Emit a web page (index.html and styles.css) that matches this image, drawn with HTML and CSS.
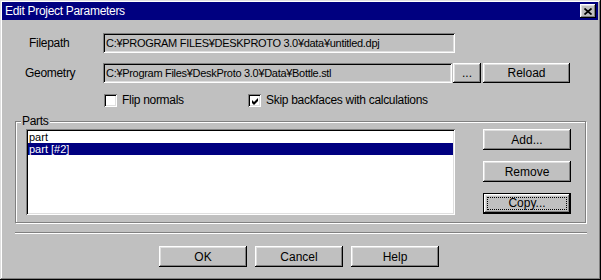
FILE: index.html
```html
<!DOCTYPE html>
<html lang="en">
<head>
	<meta charset="UTF-8">
	<title>Edit Project Parameters</title>
	<link rel="stylesheet" href="styles.css">
</head>
<body>
	<div class="window">
		<div class="titlebar">
			<span class="title">Edit Project Parameters</span>
			<span class="close">
				<svg width="8" height="7" viewBox="0 0 8 7"><path d="M0.5 0.5 L7.5 6.5 M7.5 0.5 L0.5 6.5" stroke="#000" stroke-width="1.7" fill="none"/></svg>
			</span>
		</div>

		<div class="content">
			<div class="row">
				<span class="lbl lbl-file">Filepath</span>
				<div class="field field-file">C:¥PROGRAM FILES¥DESKPROTO 3.0¥data¥untitled.dpj</div>
			</div>

			<div class="row row-geo">
				<span class="lbl lbl-geo">Geometry</span>
				<div class="field field-geo">C:¥Program Files¥DeskProto 3.0¥Data¥Bottle.stl</div>
				<button class="btn btn-dots">...</button>
				<button class="btn btn-row">Reload</button>
			</div>

			<div class="checks">
				<label class="check check-flip"><span class="box"></span>Flip normals</label>
				<label class="check"><span class="box">
					<svg width="7" height="7" viewBox="0 0 7 7"><polygon points="0,2 2,4 6,0 6,3 2,7 0,5" fill="#000"/></svg>
				</span>Skip backfaces with calculations</label>
			</div>

			<div class="group">
				<span class="legend">Parts</span>
				<div class="group-body">
					<div class="list">
						<div class="item">part</div>
						<div class="item selected">part [#2]</div>
					</div>
					<div class="side">
						<button class="btn">Add...</button>
						<button class="btn">Remove</button>
						<button class="btn default"><span class="focus">Copy...</span></button>
					</div>
				</div>
			</div>

			<div class="sep"></div>

			<div class="footer">
				<button class="btn">OK</button>
				<button class="btn">Cancel</button>
				<button class="btn">Help</button>
			</div>
		</div>
	</div>
</body>
</html>
```
FILE: styles.css
```css
*{
	margin:0;
	padding:0;
	box-sizing:border-box;
}
body{
	background:#c0c0c0;
	font-family:"Liberation Sans", Arial, sans-serif;
	font-size:11px;
	letter-spacing:-0.3px;
	color:#000;
}
.window{
	width:601px;
	height:280px;
	padding:2px 3px 3px 2px;
	background:#c0c0c0;
	box-shadow:inset -1px -1px #000, inset 1px 1px #dfdfdf, inset -2px -2px #808080, inset 2px 2px #fff;
}
.titlebar{
	height:18px;
	background:#000080;
	color:#fff;
	font-size:12px;
	display:flex;
	align-items:center;
	justify-content:space-between;
	padding-left:3px;
	padding-right:2px;
	line-height:18px;
}
.close{
	width:16px;
	height:14px;
	background:#c0c0c0;
	box-shadow:inset -1px -1px #000, inset 1px 1px #fff, inset -2px -2px #808080, inset 2px 2px #dfdfdf;
	display:flex;
	align-items:center;
	justify-content:center;
	padding-right:1px;
}
.close svg{
	display:block;
}

/* top rows */
.row{
	display:flex;
	align-items:center;
	height:20px;
	margin-top:13px;
}
.row-geo{
	margin-top:10px;
}
.lbl{
	width:101px;
	font-size:12px;
}
.lbl-file{
	padding-left:27px;
}
.lbl-geo{
	padding-left:23px;
}
.field{
	height:20px;
	line-height:16px;
	padding:2px 2px 2px 3px;
	white-space:nowrap;
	overflow:hidden;
	box-shadow:inset 1px 1px #808080, inset -1px -1px #fff, inset 2px 2px #000, inset -2px -2px #dfdfdf;
}
.field-file{
	width:352px;
}
.field-geo{
	width:349px;
}

/* buttons */
.btn{
	font:inherit;
	font-size:12px;
	color:#000;
	background:#c0c0c0;
	border:0;
	width:88px;
	height:21px;
	box-shadow:inset -1px -1px #000, inset 1px 1px #fff, inset -2px -2px #808080, inset 2px 2px #dfdfdf;
}
.btn-dots{
	width:28px;
	height:20px;
	margin-left:1px;
	margin-right:2px;
}
.btn-row{
	width:87px;
	height:20px;
}
.default{
	display:flex;
	padding:4px;
	box-shadow:inset 0 0 0 1px #000, inset -2px -2px #000, inset 2px 2px #fff, inset -3px -3px #808080, inset 3px 3px #dfdfdf;
}
.focus{
	flex:1;
	border:1px dotted #000;
	line-height:11px;
}

/* checkboxes */
.checks{
	display:flex;
	margin-top:11px;
	padding-left:102px;
	height:13px;
	line-height:13px;
	font-size:12px;
}
.check{
	display:flex;
	align-items:center;
}
.check-flip{
	width:144px;
}
.box{
	width:13px;
	height:13px;
	margin-right:5px;
	background:#fff;
	display:flex;
	align-items:center;
	justify-content:center;
	box-shadow:inset 1px 1px #808080, inset -1px -1px #fff, inset 2px 2px #000, inset -2px -2px #dfdfdf;
}
.box svg{
	display:block;
	margin-left:1px;
	margin-top:1px;
}

/* group */
.group{
	margin-top:14px;
	margin-left:13px;
	width:571px;
	height:102px;
	border:1px solid #808080;
	box-shadow:inset 1px 1px #fff, 1px 1px #fff;
}
.legend{
	display:block;
	width:max-content;
	margin:-8px 0 0 5px;
	padding:0 1px;
	height:14px;
	line-height:14px;
	font-size:12px;
	background:#c0c0c0;
}
.group-body{
	display:flex;
	margin-top:1px;
	padding-left:10px;
}
.list{
	width:429px;
	height:86px;
	background:#fff;
	padding:2px;
	font-size:11px;
	letter-spacing:0;
	box-shadow:inset 1px 1px #808080, inset -1px -1px #fff, inset 2px 2px #000, inset -2px -2px #dfdfdf;
}
.item{
	height:12px;
	line-height:12px;
	padding-left:1px;
	overflow:hidden;
}
.selected{
	background:#000080;
	color:#fff;
}
.side{
	display:flex;
	flex-direction:column;
	gap:11px;
	margin-left:28px;
}

.sep{
	margin-top:9px;
	margin-left:13px;
	width:572px;
	height:2px;
	border-top:1px solid #808080;
	border-bottom:1px solid #fff;
}
.footer{
	display:flex;
	gap:8px;
	margin-top:12px;
	padding-left:157px;
}
```
